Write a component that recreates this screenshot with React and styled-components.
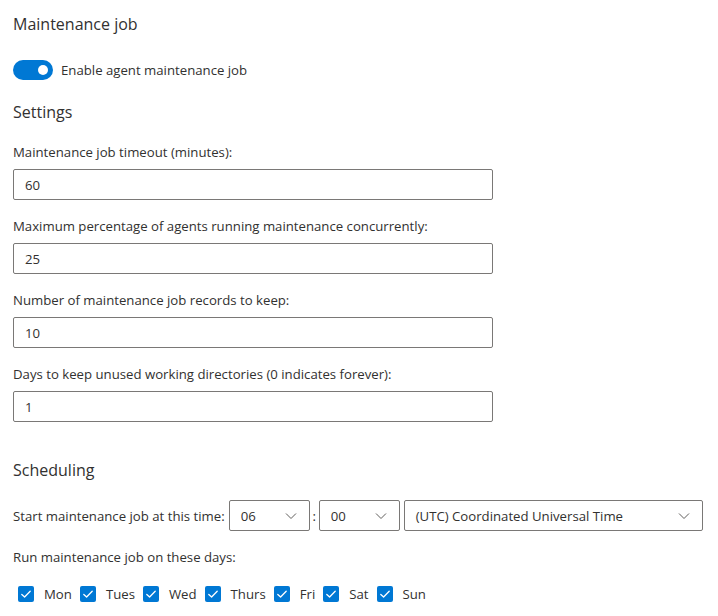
import styled, { createGlobalStyle } from "styled-components"

const GlobalStyle = createGlobalStyle`
  body {
    margin: 0;
    background: #ffffff;
    font-family: "Open Sans", "Noto Sans", sans-serif;
    color: #323130;
  }
`

const fields = [
  { label: "Maintenance job timeout (minutes):", value: "60" },
  { label: "Maximum percentage of agents running maintenance concurrently:", value: "25" },
  { label: "Number of maintenance job records to keep:", value: "10" },
  { label: "Days to keep unused working directories (0 indicates forever):", value: "1" },
]

const days = ["Mon", "Tues", "Wed", "Thurs", "Fri", "Sat", "Sun"]

const Chevron = () => (
  <svg width="12" height="8" viewBox="0 0 12 8" fill="none">
    <path d="M1 1.5 L6 6.5 L11 1.5" stroke="#605e5c" strokeWidth="1" />
  </svg>
)

const Check = () => (
  <svg width="16" height="16" viewBox="0 0 16 16" fill="none">
    <path d="M3.8 8.4 L6.6 11 L12.2 5.2" stroke="#ffffff" strokeWidth="1.3" strokeLinecap="round" strokeLinejoin="round" />
  </svg>
)

const App = () => {
  return (
    <>
      <GlobalStyle />
      <Page>
        <Heading>Maintenance job</Heading>
        <ToggleRow>
          <Toggle $on>
            <span className="knob" />
          </Toggle>
          <span>Enable agent maintenance job</span>
        </ToggleRow>

        <Heading $top={21}>Settings</Heading>
        <FieldList>
          {fields.map((f) => (
            <Field key={f.label}>
              <Label>{f.label}</Label>
              <TextBox>{f.value}</TextBox>
            </Field>
          ))}
        </FieldList>

        <Heading $top={37}>Scheduling</Heading>
        <TimeRow>
          <span className="time-label">Start maintenance job at this time:</span>
          <Select $width={81}>
            <span>06</span>
            <Chevron />
          </Select>
          <span className="colon">:</span>
          <Select $width={81}>
            <span>00</span>
            <Chevron />
          </Select>
          <Select $width={299}>
            <span>(UTC) Coordinated Universal Time</span>
            <Chevron />
          </Select>
        </TimeRow>

        <Label $top={16}>Run maintenance job on these days:</Label>
        <DaysRow>
          {days.map((d) => (
            <DayItem key={d}>
              <CheckBox>
                <Check />
              </CheckBox>
              <span>{d}</span>
            </DayItem>
          ))}
        </DaysRow>
      </Page>
    </>
  )
}

export default App

const Page = styled.div`
  padding: 13px 13px 0 13px;
  font-size: 13.2px;
`

const Heading = styled.div`
  font-size: 16px;
  line-height: 22px;
  height: 22px;
  margin-top: ${(p) => p.$top || 0}px;
  color: #323130;
`

const ToggleRow = styled.div`
  display: flex;
  align-items: center;
  gap: 8px;
  margin-top: 25px;
  height: 20px;
`

const Toggle = styled.div`
  width: 40px;
  height: 20px;
  border-radius: 10px;
  background: ${(p) => (p.$on ? "#0078d4" : "#ffffff")};
  position: relative;
  flex-shrink: 0;

  .knob {
    position: absolute;
    top: 5px;
    left: ${(p) => (p.$on ? "25px" : "5px")};
    width: 10px;
    height: 10px;
    border-radius: 50%;
    background: #ffffff;
  }
`

const FieldList = styled.div`
  margin-top: 19px;
`

const Field = styled.div`
  display: flex;
  flex-direction: column;
  gap: 7px;
  margin-bottom: 16px;
`

const Label = styled.div`
  line-height: 20px;
  height: 20px;
  margin-top: ${(p) => p.$top || 0}px;
`

const TextBox = styled.div`
  box-sizing: border-box;
  width: 480px;
  height: 31px;
  border: 1px solid #7a7876;
  border-radius: 2px;
  padding: 0 11px;
  display: flex;
  align-items: center;
`

const TimeRow = styled.div`
  display: flex;
  align-items: center;
  margin-top: 19px;
  height: 31px;

  .time-label {
    margin-right: 4px;
  }

  .colon {
    width: 9px;
    text-align: center;
  }

  & > div:last-child {
    margin-left: 4px;
  }
`

const Select = styled.div`
  box-sizing: border-box;
  width: ${(p) => p.$width}px;
  height: 31px;
  border: 1px solid #7a7876;
  border-radius: 2px;
  padding: 0 12px 0 11px;
  display: flex;
  align-items: center;
  justify-content: space-between;
`

const DaysRow = styled.div`
  display: flex;
  align-items: center;
  gap: 8px;
  margin-top: 17px;
  padding-left: 5px;
  height: 20px;
`

const DayItem = styled.div`
  display: flex;
  align-items: center;
  gap: 10px;
`

const CheckBox = styled.div`
  width: 16px;
  height: 16px;
  border-radius: 2px;
  background: #0078d4;
  display: flex;
  align-items: center;
  justify-content: center;
`
